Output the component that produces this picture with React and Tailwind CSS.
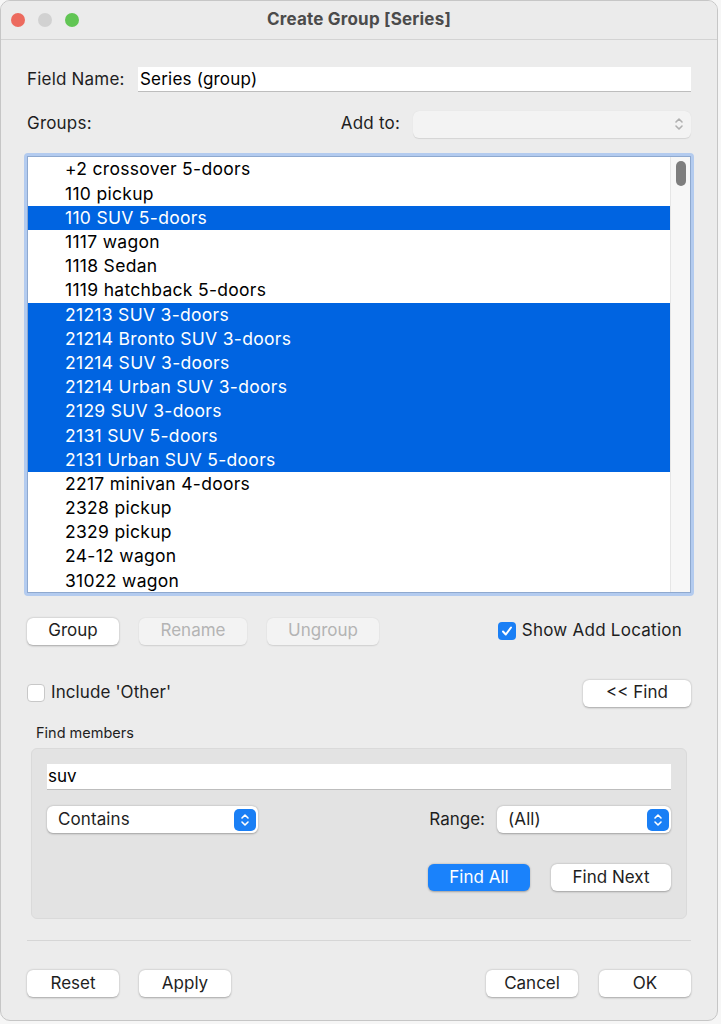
import React from 'react';

const items = [
  '+2 crossover 5-doors',
  '110 pickup',
  '110 SUV 5-doors',
  '1117 wagon',
  '1118 Sedan',
  '1119 hatchback 5-doors',
  '21213 SUV 3-doors',
  '21214 Bronto SUV 3-doors',
  '21214 SUV 3-doors',
  '21214 Urban SUV 3-doors',
  '2129 SUV 3-doors',
  '2131 SUV 5-doors',
  '2131 Urban SUV 5-doors',
  '2217 minivan 4-doors',
  '2328 pickup',
  '2329 pickup',
  '24-12 wagon',
  '31022 wagon',
];

const selected = [2, 6, 7, 8, 9, 10, 11, 12];

const btn =
  'flex h-[27px] items-center justify-center rounded-[6px] bg-white text-[17px] text-[#1e1e1e] shadow-[0_0.5px_2px_rgba(0,0,0,0.3)]';
const btnOff =
  'flex h-[27px] items-center justify-center rounded-[6px] bg-[#f3f3f3] text-[17px] text-[#b4b4b4] shadow-[0_0.5px_1.5px_rgba(0,0,0,0.12)]';

const Chevrons = ({ color = 'white' }) => (
  <svg width="10" height="16" viewBox="0 0 10 16" fill="none">
    <path d="M2 6 L5 3 L8 6" stroke={color} strokeWidth="1.6" strokeLinecap="round" strokeLinejoin="round" />
    <path d="M2 10 L5 13 L8 10" stroke={color} strokeWidth="1.6" strokeLinecap="round" strokeLinejoin="round" />
  </svg>
);

const Select = ({ label, className }) => (
  <div className={`flex h-[27px] items-center justify-between rounded-[6px] bg-white pl-[11px] pr-[2px] shadow-[0_0.5px_2px_rgba(0,0,0,0.3)] ${className}`}>
    <span className="text-[17px] tracking-[0.1px] text-[#1e1e1e]">{label}</span>
    <div className="flex h-[22px] w-[22px] items-center justify-center rounded-[5px] bg-[#1a7ff5]">
      <Chevrons />
    </div>
  </div>
);

export default function App() {
  return (
    <div className="min-h-screen bg-[#f6f6f6]" style={{ fontFamily: 'Inter, "Liberation Sans", sans-serif' }}>
      <div className="flex h-[1021px] w-[718px] flex-col overflow-hidden rounded-[10px] border border-[#c6c6c6] bg-[#ececec]">
        {/* title bar */}
        <div className="relative flex h-[39px] shrink-0 items-center justify-center border-b border-[#d3d3d3] bg-[#ebebeb]">
          <div className="absolute left-[10px] top-[12px] flex gap-[13px]">
            <span className="h-[14px] w-[14px] rounded-full bg-[#ec6a5e]" />
            <span className="h-[14px] w-[14px] rounded-full bg-[#d1d1d1]" />
            <span className="h-[14px] w-[14px] rounded-full bg-[#61c554]" />
          </div>
          <span className="text-[17px] font-bold tracking-[0.2px] text-[#4b4b4b]">Create Group [Series]</span>
        </div>

        <div className="flex flex-col px-[26px]">
          {/* field name */}
          <div className="mt-[27px] flex items-center">
            <span className="w-[111px] text-[17px] tracking-[0.2px] text-[#1e1e1e]">Field Name:</span>
            <div className="flex h-[25px] flex-1 items-center border-b border-[#bdbdbd] bg-white px-[2px] text-[17px] tracking-[0.2px] text-black">
              Series (group)
            </div>
          </div>

          {/* groups / add to */}
          <div className="mt-[18px] flex h-[27px] items-center">
            <span className="flex-1 text-[17px] tracking-[0.2px] text-[#1e1e1e]">Groups:</span>
            <span className="mr-[13px] text-[17px] tracking-[0.2px] text-[#1e1e1e]">Add to:</span>
            <div className="flex h-[27px] w-[278px] items-center justify-end rounded-[6px] bg-[#f3f3f3] pr-[7px] shadow-[0_0.5px_1px_rgba(0,0,0,0.1)]">
              <Chevrons color="#b0b0b0" />
            </div>
          </div>

          {/* list */}
          <div className="-mx-[3px] mt-[15px] rounded-[4px] border-[3px] border-[#b3cbef]">
            <div className="flex h-[437px] border border-[#8fa9cf] bg-white">
              <div className="flex-1 pt-[1px]">
                {items.map((it, i) => {
                  const sel = selected.includes(i);
                  return (
                    <div
                      key={it}
                      className={`flex h-[24.2px] items-center pl-[37px] text-[17.5px] tracking-[0.3px] ${sel ? 'bg-[#0064e1] text-white' : 'text-black'}`}
                    >
                      {it}
                    </div>
                  );
                })}
              </div>
              <div className="w-[20px] border-l border-[#e6e6e6] bg-[#f7f7f7] pt-[4px]">
                <div className="mx-auto h-[25px] w-[10px] rounded-full bg-[#7e7e7e]" />
              </div>
            </div>
          </div>

          {/* buttons row */}
          <div className="mt-[22px] flex items-center">
            <div className={`${btn} w-[92px]`}>Group</div>
            <div className={`${btnOff} ml-[20px] w-[108px]`}>Rename</div>
            <div className={`${btnOff} ml-[20px] w-[112px]`}>Ungroup</div>
            <div className="ml-auto mr-[9px] flex items-center">
              <div className="flex h-[18px] w-[18px] items-center justify-center rounded-[4px] bg-[#1a7ff5]">
                <svg width="12" height="12" viewBox="0 0 12 12" fill="none">
                  <path d="M2 6.5 L4.8 9.5 L10 2.5" stroke="white" strokeWidth="2" strokeLinecap="round" strokeLinejoin="round" />
                </svg>
              </div>
              <span className="ml-[6px] text-[17px] tracking-[0.25px] text-[#1e1e1e]">Show Add Location</span>
            </div>
          </div>

          {/* include other / find */}
          <div className="mt-[35px] flex items-center">
            <div className="h-[18px] w-[18px] rounded-[4px] border border-[#c8c8c8] bg-white" />
            <span className="ml-[6px] text-[17px] tracking-[0.1px] text-[#1e1e1e]">Include 'Other'</span>
            <div className={`${btn} ml-auto w-[108px]`}>&lt;&lt; Find</div>
          </div>

          <span className="ml-[9px] mt-[15px] text-[14.5px] text-[#1e1e1e]">Find members</span>

          {/* find panel */}
          <div className="mx-[4px] mt-[5px] flex h-[171px] flex-col rounded-[6px] border border-[#dadada] bg-[#e3e3e3] px-[15px] pt-[15px]">
            <div className="flex h-[26px] items-center border-b border-[#bdbdbd] bg-white px-[1px] text-[17px] text-black">
              suv
            </div>
            <div className="mt-[16px] flex items-center">
              <Select label="Contains" className="w-[211px]" />
              <span className="ml-auto mr-[12px] text-[17px] text-[#1e1e1e]">Range:</span>
              <Select label="(All)" className="w-[174px]" />
            </div>
            <div className="mt-[31px] flex justify-end gap-[21px]">
              <div className="flex h-[27px] w-[102px] items-center justify-center rounded-[6px] bg-[#1a82fb] text-[17px] text-white shadow-[0_0.5px_2px_rgba(0,0,0,0.3)]">
                Find All
              </div>
              <div className={`${btn} w-[120px]`}>Find Next</div>
            </div>
          </div>

          <div className="mt-[21px] h-px bg-[#d6d6d6]" />

          {/* bottom */}
          <div className="mt-[29px] flex items-center">
            <div className={`${btn} w-[92px]`}>Reset</div>
            <div className={`${btn} ml-[20px] w-[92px]`}>Apply</div>
            <div className={`${btn} ml-auto w-[92px]`}>Cancel</div>
            <div className={`${btn} ml-[21px] w-[92px]`}>OK</div>
          </div>
        </div>
      </div>
    </div>
  );
}
